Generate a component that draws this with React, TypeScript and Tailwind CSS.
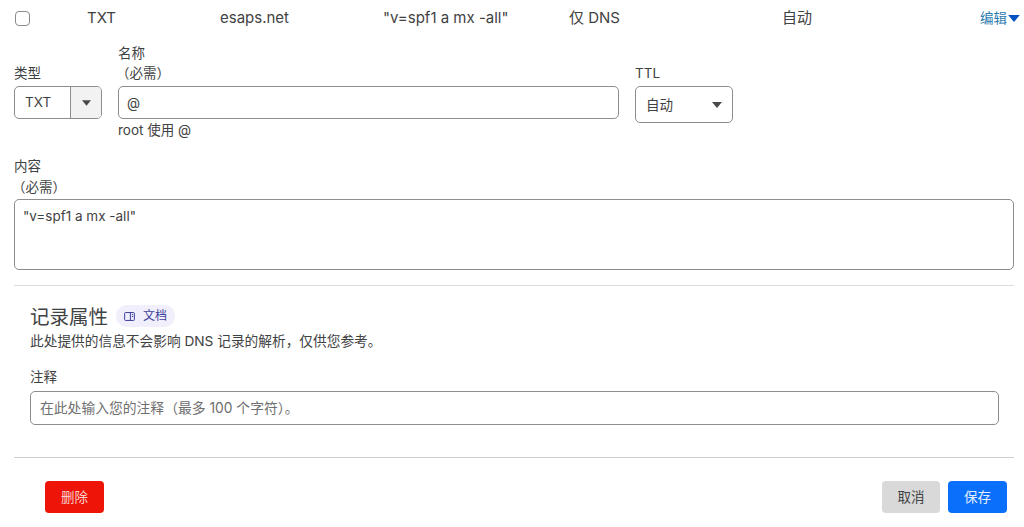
import React from "react";

function Caret({ className }: { className: string }) {
  return (
    <svg viewBox="0 0 10 6" className={className} fill="currentColor">
      <path d="M0 0h10L5 6z" />
    </svg>
  );
}

export default function App() {
  return (
    <div className="w-[1024px] h-[527px] overflow-hidden bg-white text-[#3f4243] font-['Inter','Noto_Sans_CJK_SC',sans-serif] text-[13.5px] leading-[20px]">
      {/* table row */}
      <div className="flex items-center h-[36px] text-[15px] pl-[15px] pr-[3px]">
        <div className="w-[72px] shrink-0">
          <div className="w-[15px] h-[15px] rounded-[4px] border border-[#8a8a8a] bg-white" />
        </div>
        <div className="w-[133px] shrink-0">TXT</div>
        <div className="w-[163px] shrink-0">esaps.net</div>
        <div className="w-[186px] shrink-0">"v=spf1 a mx -all"</div>
        <div className="w-[213px] shrink-0">仅 DNS</div>
        <div className="w-[198px] shrink-0">自动</div>
        <div className="flex items-center gap-[1px] text-[#2c7cb0] text-[13.5px]">
          编辑
          <Caret className="w-[12px] h-[7px] text-[#0051c3]" />
        </div>
      </div>

      {/* first form row */}
      <div className="flex items-start gap-[16px] pl-[14px] mt-[7px] h-[100px]">
        <div className="w-[88px] pt-[20px]">
          <div className="h-[23px]">类型</div>
          <div className="flex h-[33px] border border-[#8d8d8d] rounded-[5px] overflow-hidden">
            <div className="w-[55px] pl-[10px] leading-[31px]">TXT</div>
            <div className="flex-1 flex items-center justify-center bg-[#f2f2f2] border-l border-[#8d8d8d]">
              <Caret className="w-[9px] h-[6px] text-[#4a4a4a]" />
            </div>
          </div>
        </div>
        <div className="w-[501px]">
          <div className="h-[20px]">名称</div>
          <div className="h-[23px] -ml-[2px]">（必需）</div>
          <div className="h-[33px] border border-[#8d8d8d] rounded-[5px] pl-[8px] leading-[32px]">@</div>
          <div className="mt-[1px]">root 使用 @</div>
        </div>
        <div className="w-[98px] pt-[20px]">
          <div className="h-[23px]">TTL</div>
          <div className="flex items-center justify-between h-[37px] border border-[#8d8d8d] rounded-[5px] pl-[10px] pr-[10px]">
            <span>自动</span>
            <Caret className="w-[10px] h-[6px] text-[#4a4a4a]" />
          </div>
        </div>
      </div>

      {/* content */}
      <div className="pl-[14px] pr-[10px] mt-[13px]">
        <div className="h-[20px]">内容</div>
        <div className="h-[23px] -ml-[2px] pt-[1px]">（必需）</div>
        <div className="h-[71px] border border-[#8d8d8d] rounded-[5px] pl-[8px] pt-[6px]">"v=spf1 a mx -all"</div>
        <div className="h-px bg-[#dcdcdc] mt-[15px]" />
      </div>

      {/* record attributes */}
      <div className="pl-[30px] pr-[25px] mt-[19px]">
        <div className="flex items-center gap-[8px] h-[22px]">
          <span className="text-[19.5px] relative top-[1px]">记录属性</span>
          <span className="flex items-center gap-[8px] h-[22px] w-[59px] pl-[8px] rounded-full bg-[#f0effb] text-[#3d3f9c] text-[12px]">
            <svg viewBox="0 0 12 10" className="w-[11px] h-[9px]" fill="none" stroke="currentColor" strokeWidth="1.1">
              <rect x="0.6" y="0.6" width="10.8" height="8.8" rx="1" />
              <path d="M7 0.6v8.8M8.6 3h1.4M8.6 5h1.4" />
            </svg>
            文档
          </span>
        </div>
        <div className="mt-[4px] h-[20px] text-[13.7px]">此处提供的信息不会影响 DNS 记录的解析，仅供您参考。</div>
        <div className="mt-[16px] h-[24px]">注释</div>
        <div className="h-[34px] border border-[#8d8d8d] rounded-[5px] pl-[9px] leading-[33px] text-[#6f6f6f] text-[13.8px]">在此处输入您的注释（最多 100 个字符）。</div>
      </div>

      {/* footer */}
      <div className="pl-[14px] pr-[10px] mt-[32px]">
        <div className="h-px bg-[#cfcfcf]" />
        <div className="flex justify-between items-center mt-[23px] pl-[31px] pr-[7px]">
          <button className="w-[59px] h-[32px] rounded-[4px] bg-[#ee1407] text-[#f8d0cc]">删除</button>
          <div className="flex gap-[8px]">
            <button className="w-[58px] h-[32px] rounded-[4px] bg-[#d9d9d9] text-[#3f4243]">取消</button>
            <button className="w-[59px] h-[32px] rounded-[4px] bg-[#0a6ffb] text-[#e2eeff]">保存</button>
          </div>
        </div>
      </div>
    </div>
  );
}
